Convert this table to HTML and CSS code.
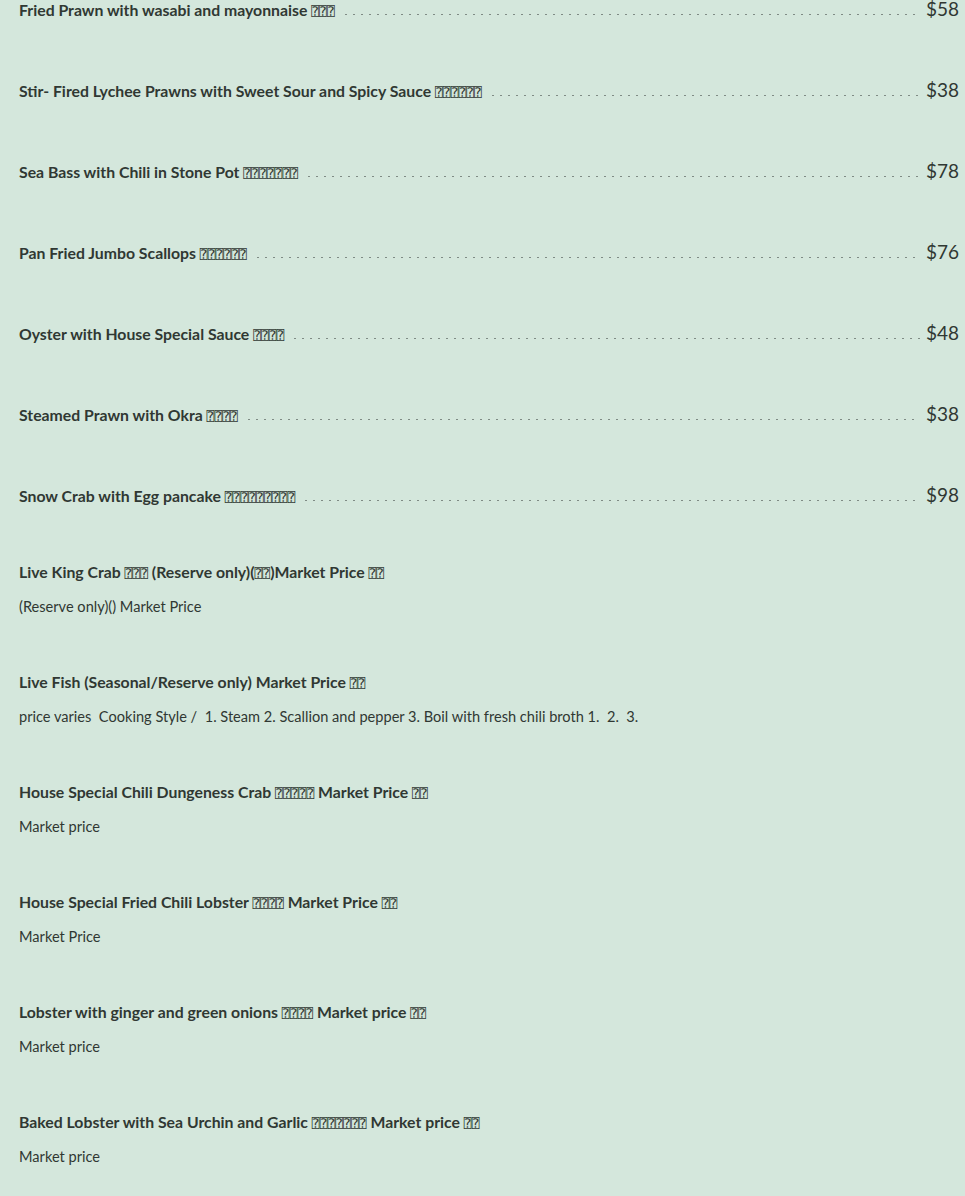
FILE: index.html
```html
<!DOCTYPE html>
<html lang="en">
<head>
<meta charset="utf-8">
<title>Seafood Menu</title>
<link rel="stylesheet" href="styles.css">
</head>
<body>
<main class="menu">
  <section class="dishes">
    <div class="dish"><span class="dish-name">Fried Prawn with wasabi and mayonnaise <span class="cjk">⍰⍰⍰</span></span><span class="leader"></span><span class="price">$58</span></div>
    <div class="dish"><span class="dish-name">Stir- Fired Lychee Prawns with Sweet Sour and Spicy Sauce <span class="cjk">⍰⍰⍰⍰⍰⍰</span></span><span class="leader"></span><span class="price">$38</span></div>
    <div class="dish"><span class="dish-name">Sea Bass with Chili in Stone Pot <span class="cjk">⍰⍰⍰⍰⍰⍰⍰</span></span><span class="leader"></span><span class="price">$78</span></div>
    <div class="dish"><span class="dish-name">Pan Fried Jumbo Scallops <span class="cjk">⍰⍰⍰⍰⍰⍰</span></span><span class="leader"></span><span class="price">$76</span></div>
    <div class="dish"><span class="dish-name">Oyster with House Special Sauce <span class="cjk">⍰⍰⍰⍰</span></span><span class="leader"></span><span class="price">$48</span></div>
    <div class="dish"><span class="dish-name">Steamed Prawn with Okra <span class="cjk">⍰⍰⍰⍰</span></span><span class="leader"></span><span class="price">$38</span></div>
    <div class="dish"><span class="dish-name">Snow Crab with Egg pancake <span class="cjk">⍰⍰⍰⍰⍰⍰⍰⍰⍰</span></span><span class="leader"></span><span class="price">$98</span></div>
  </section>
  <section class="market-list">
    <div class="market">
      <div class="dish-name">Live King Crab <span class="cjk">⍰⍰⍰</span> (Reserve only)(<span class="cjk">⍰⍰</span>)Market Price <span class="cjk">⍰⍰</span></div>
      <div class="desc">(Reserve only)() Market Price</div>
    </div>
    <div class="market">
      <div class="dish-name">Live Fish (Seasonal/Reserve only) Market Price <span class="cjk">⍰⍰</span></div>
      <div class="desc">price varies&nbsp; Cooking Style /&nbsp; 1. Steam 2. Scallion and pepper 3. Boil with fresh chili broth 1.&nbsp; 2.&nbsp; 3.</div>
    </div>
    <div class="market">
      <div class="dish-name">House Special Chili Dungeness Crab <span class="cjk">⍰⍰⍰⍰⍰</span> Market Price <span class="cjk">⍰⍰</span></div>
      <div class="desc">Market price</div>
    </div>
    <div class="market">
      <div class="dish-name">House Special Fried Chili Lobster <span class="cjk">⍰⍰⍰⍰</span> Market Price <span class="cjk">⍰⍰</span></div>
      <div class="desc">Market Price</div>
    </div>
    <div class="market">
      <div class="dish-name">Lobster with ginger and green onions <span class="cjk">⍰⍰⍰⍰</span> Market price <span class="cjk">⍰⍰</span></div>
      <div class="desc">Market price</div>
    </div>
    <div class="market">
      <div class="dish-name">Baked Lobster with Sea Urchin and Garlic <span class="cjk">⍰⍰⍰⍰⍰⍰⍰</span> Market price <span class="cjk">⍰⍰</span></div>
      <div class="desc">Market price</div>
    </div>
  </section>
</main>
</body>
</html>
```

FILE: styles.css
```css
html, body {
  margin: 0;
  padding: 0;
}

body {
  background: #d4e7dc;
  color: #303833;
  font-family: Lato, "Liberation Sans", sans-serif;
}

.menu {
  padding: 0 6px 0 19px;
  margin-top: -1px;
}

.dishes {
  display: flex;
  flex-direction: column;
  gap: 61px;
}

.dish {
  display: flex;
  align-items: baseline;
  height: 20px;
}

.dish-name {
  font-weight: 700;
  font-size: 15.8px;
  line-height: 20px;
  white-space: nowrap;
}

.cjk {
  font-family: "DejaVu Sans Mono", "DejaVu Sans", monospace;
  font-weight: 400;
  font-size: 13px;
  line-height: 0;
}

.leader {
  flex: 1;
  height: 3px;
  margin: 0 6px 0 7px;
  background-image: radial-gradient(ellipse 1.2px 0.9px, #7f8b85 90%, transparent 100%);
  background-size: 8px 3px;
  background-position: 0 0;
  background-repeat: repeat-x;
}

.price {
  font-size: 19px;
  line-height: 20px;
}

.market-list {
  margin-top: 57px;
  display: flex;
  flex-direction: column;
  gap: 55px;
}

.market .dish-name {
  margin-bottom: 15px;
}

.desc {
  font-size: 14.6px;
  line-height: 20px;
}
```
